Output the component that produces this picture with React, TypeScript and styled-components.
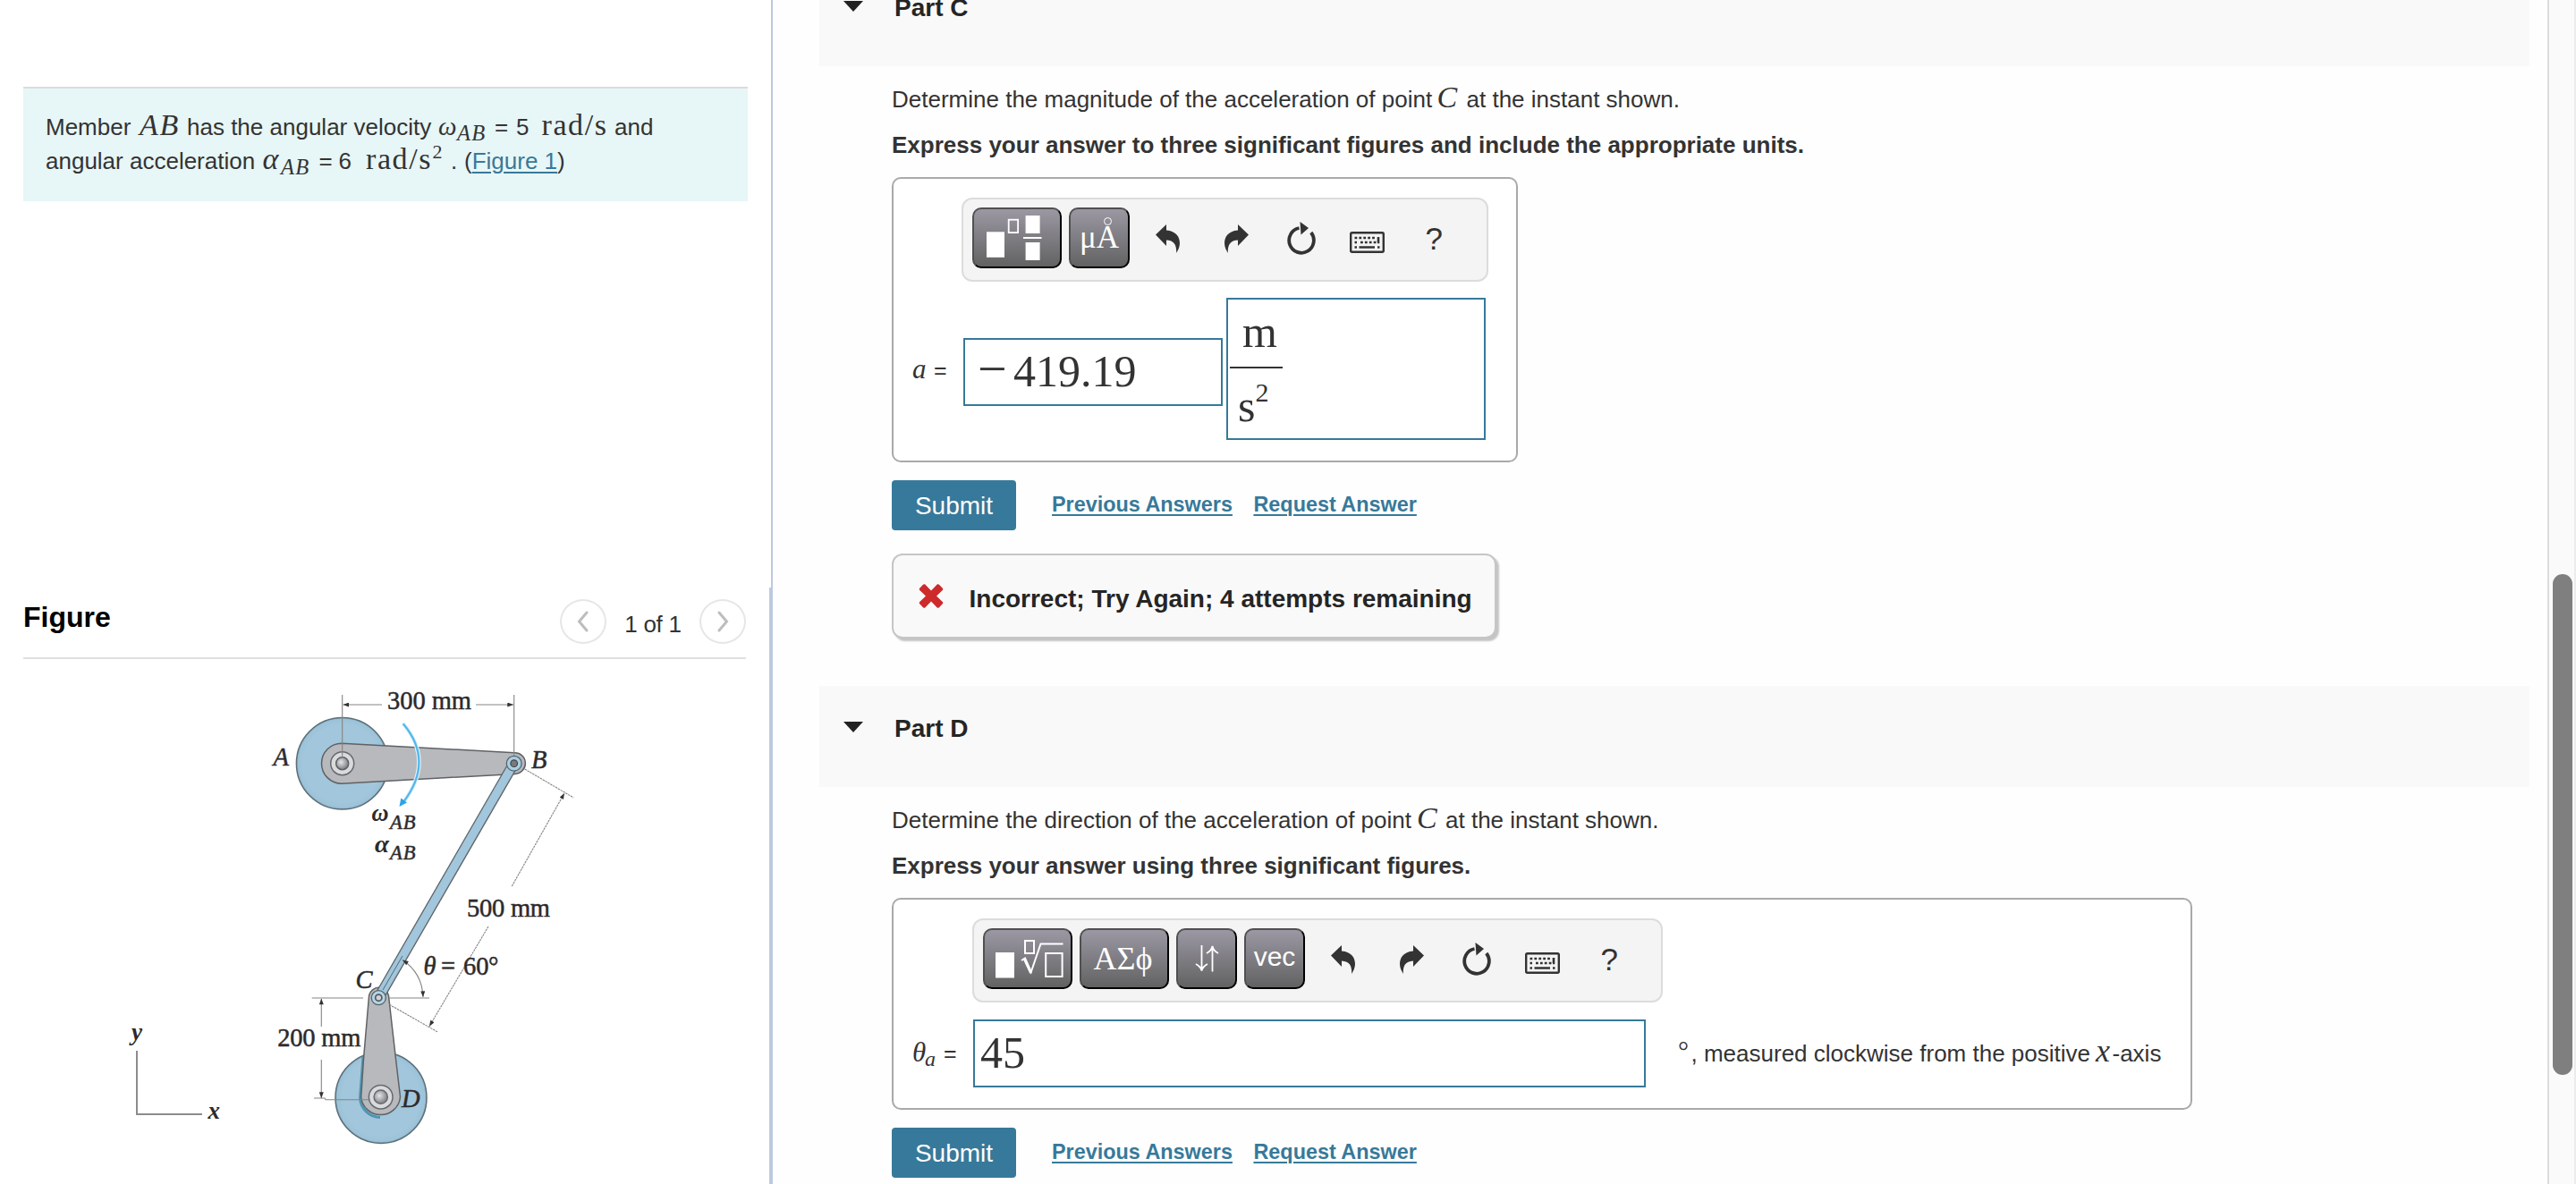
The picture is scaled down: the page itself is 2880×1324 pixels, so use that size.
import React from "react";
import styled, { createGlobalStyle, css } from "styled-components";

const sans = '"Liberation Sans", Arial, Helvetica, sans-serif';
const serif = '"Liberation Serif", "Times New Roman", serif';
const teal = "#37799a";

const Global = createGlobalStyle`
  * { box-sizing: border-box; }
  html, body { margin: 0; padding: 0; overflow: hidden; }
  body { background: #fff; color: #333; font-family: ${sans}; }
`;

/* ---------- page frame ---------- */

const Page = styled.div`
  display: flex;
  width: 2880px;
  height: 1324px;
  overflow: hidden;
  background: #fefefe;
`;

const Left = styled.aside`
  display: flex;
  flex-direction: column;
  flex: none;
  width: 864px;
  background: #fff;
  border-right: 2px solid #bccae0;
`;

const ProblemPane = styled.section`
  flex: none;
  height: 657px;
  padding: 97px 26px 0;
`;

const ProblemBox = styled.div`
  width: 810px;
  height: 128px;
  padding: 24px 0 0 25px;
  border-top: 2px solid #dcdcdc;
  background: #e7f6f6;
`;

const Line = styled.div<{ $bold?: boolean; $top?: number }>`
  height: 38px;
  margin-top: ${(p) => p.$top ?? 0}px;
  line-height: 38px;
  font-size: 26px;
  font-weight: ${(p) => (p.$bold ? 700 : 400)};
  white-space: pre;
`;

const Run = styled.span<{ $w?: number }>`
  display: inline-block;
  ${(p) => p.$w && css`width: ${p.$w}px;`}
  height: 38px;
  vertical-align: top;
  white-space: pre;
`;

const Math = styled.span<{ $size?: number; $roman?: boolean; $spacing?: number; $rise?: number }>`
  display: inline-block;
  font-family: ${serif};
  font-style: ${(p) => (p.$roman ? "normal" : "italic")};
  font-weight: 400;
  font-size: ${(p) => p.$size ?? 34}px;
  line-height: 0;
  letter-spacing: ${(p) => p.$spacing ?? 0}px;
  vertical-align: ${(p) => p.$rise ?? 0}px;
`;

const Link = styled.a`
  color: ${teal};
  text-decoration: underline;
  text-decoration-thickness: 2px;
  text-underline-offset: 3px;
`;

/* ---------- figure pane ---------- */

const FigurePane = styled.section`
  flex: 1;
  padding-left: 26px;
  border-right: 2px solid #bccae0;
`;

const FigureHeader = styled.header`
  display: flex;
  align-items: center;
  width: 808px;
  height: 80px;
  border-bottom: 2px solid #dfdfdf;
`;

const FigureTitle = styled.h2`
  margin: -13px auto 0 0;
  color: #000;
  font-size: 32px;
  line-height: 36px;
`;

const RoundButton = styled.button`
  display: flex;
  align-items: center;
  justify-content: center;
  width: 52px;
  height: 50px;
  margin-bottom: 3px;
  padding: 0;
  border: 2px solid #e6e6e6;
  border-radius: 50%;
  background: #fff;
`;

const Counter = styled.span`
  width: 104px;
  padding-top: 3px;
  font-size: 26px;
  line-height: 30px;
  letter-spacing: -0.3px;
  text-align: center;
`;

const Chevron = ({ flip }: { flip?: boolean }) => (
  <svg width="16" height="26" viewBox="0 0 16 26" fill="none" stroke="#bdbdbd" strokeWidth="3" strokeLinecap="round">
    <path d={flip ? "M4 3 12.5 13 4 23" : "M12 3 3.5 13 12 23"} />
  </svg>
);

const Drawing = styled.svg`
  display: block;
  margin-left: -26px;
  font-family: ${serif};
`;

const Dim = styled.path`
  fill: none;
  stroke: #858585;
  stroke-width: 1.1;
`;

const Body = styled.path`
  fill: #b8b9bc;
  stroke: #5f6265;
  stroke-width: 1.5;
`;

const Label = styled.text<{ $italic?: boolean; $size?: number; $bold?: boolean }>`
  font-style: ${(p) => (p.$italic ? "italic" : "normal")};
  font-weight: ${(p) => (p.$bold ? 700 : 400)};
  font-size: ${(p) => p.$size ?? 28.5}px;
  fill: #2d2a2b;
  stroke: #2d2a2b;
  stroke-width: ${(p) => (p.$bold ? 0 : 0.5)};
`;

const Linkage = () => (
  <Drawing width="860" height="587" viewBox="0 737 860 587">
    <defs>
      <radialGradient id="disc">
        <stop offset="0.85" stopColor="#a2c6db" />
        <stop offset="0.96" stopColor="#9cc3d9" />
        <stop offset="1" stopColor="#7fabc4" />
      </radialGradient>
      <radialGradient id="pin" cx="0.4" cy="0.4">
        <stop offset="0" stopColor="#e4e5e6" />
        <stop offset="1" stopColor="#8e9093" />
      </radialGradient>
      <marker id="tip" viewBox="0 0 8 6" refX="8" refY="3" markerWidth="7" markerHeight="5" orient="auto-start-reverse" markerUnits="userSpaceOnUse">
        <path d="M0 0 8 3 0 6Z" fill="#333" />
      </marker>
    </defs>

    <circle cx="382.7" cy="853.7" r="51.3" fill="url(#disc)" stroke="#5d6d76" strokeWidth="1.5" />
    <Body d="M382 831.2 L575 841.7 A11.8 11.8 0 0 1 576 865.4 L382 876.2 A22.5 22.5 0 0 1 382 831.2Z" />
    <circle cx="382.7" cy="853.7" r="13" fill="#d9dadc" stroke="#66696c" strokeWidth="1.5" />
    <circle cx="382.7" cy="853.7" r="7" fill="url(#pin)" stroke="#5d6063" strokeWidth="1.5" />

    <circle cx="426" cy="1227.4" r="51" fill="url(#disc)" stroke="#5d6d76" strokeWidth="1.5" />
    <path d="M406 1182 L402.5 1228 A23 23 0 0 0 425 1249.5" fill="none" stroke="#4d96b3" strokeWidth="3" />
    <Body d="M412.6 1113 A11.2 11.2 0 0 1 434.4 1113 L442.5 1184 L447.5 1226.7 A22 22 0 0 1 403.7 1226.7 L406.5 1184Z" />
    <circle cx="425.7" cy="1226.7" r="13.3" fill="#d9dadc" stroke="#66696c" strokeWidth="1.5" />
    <circle cx="425.7" cy="1226.7" r="7.6" fill="url(#pin)" stroke="#66696c" strokeWidth="1.5" />

    <path d="M574.5 853.7 423.3 1115.7" stroke="#5d6468" strokeWidth="12" />
    <path d="M574.5 853.7 423.3 1115.7" stroke="#a2c6db" strokeWidth="9.4" />
    <path d="M450 1069 428 1107" stroke="#4f6c7a" strokeWidth="1" />
    <circle cx="574.7" cy="853.7" r="8.4" fill="#a9cfe3" stroke="#54646d" strokeWidth="1.3" />
    <circle cx="574.7" cy="853.7" r="3.8" fill="#777b7f" stroke="#444" strokeWidth="1.2" />
    <circle cx="423.3" cy="1115.7" r="8" fill="#b5d5e6" stroke="#54646d" strokeWidth="1.3" />
    <circle cx="423.3" cy="1115.7" r="3.6" fill="#d0d3d5" stroke="#55595c" strokeWidth="1.7" />

    <Dim d="M382.7 777V848 M574.7 777V845" />
    <Dim d="M427 788H383.5" markerEnd="url(#tip)" />
    <Dim d="M532 788H574" markerEnd="url(#tip)" />
    <Dim d="M586.7 860 641.3 892 M435.3 1123.3 489.3 1154" strokeDasharray="2.5 0.8" />
    <Dim d="M572.3 991 631 887" markerEnd="url(#tip)" strokeDasharray="2.5 0.8" />
    <Dim d="M546 1036 480 1147.7" markerEnd="url(#tip)" strokeDasharray="2.5 0.8" />
    <Dim d="M435 1116H480 M348.7 1116H406 M351 1228H363L364 1229.7H412" />
    <Dim d="M359.3 1148V1116.7" markerEnd="url(#tip)" />
    <Dim d="M359.3 1185V1228" markerEnd="url(#tip)" />
    <Dim d="M450 1073.5Q472 1088 473 1115" markerStart="url(#tip)" markerEnd="url(#tip)" />

    <path d="M450.7 809.3Q486 851 451 897" fill="none" stroke="#e4f1f8" strokeWidth="4.5" />
    <path d="M450.7 809.3Q486 851 451 897" fill="none" stroke="#52b8ee" strokeWidth="2.3" />
    <path d="M446.5 902 448.3 892.5 455 897.5Z" fill="#2ea3e6" />

    <path d="M153 1175V1246H226" fill="none" stroke="#8c8c8c" strokeWidth="2" />

    <Label x="433" y="792.7" textLength="94">300 mm</Label>
    <Label x="522" y="1024.7" textLength="93">500 mm</Label>
    <Label x="310.3" y="1170" textLength="93">200 mm</Label>
    <Label $italic x="305.5" y="855.7">A</Label>
    <Label $italic x="594" y="859">B</Label>
    <Label $italic x="397.5" y="1104.7">C</Label>
    <Label $italic x="449" y="1238.3">D</Label>
    <Label $italic $bold $size={27} x="415.5" y="918" textLength="19" lengthAdjust="spacingAndGlyphs">ω</Label>
    <Label $italic $size={22.5} x="436" y="926.7" textLength="28.5">AB</Label>
    <Label $italic $bold $size={27} x="419" y="952.7" textLength="16" lengthAdjust="spacingAndGlyphs">α</Label>
    <Label $italic $size={22.5} x="436" y="961" textLength="28.5">AB</Label>
    <Label $italic x="473.5" y="1090">θ</Label>
    <Label x="493" y="1090">=</Label>
    <Label x="518" y="1090">60</Label>
    <Label x="546" y="1090">°</Label>
    <Label $italic $bold $size={27} x="147" y="1162.5">y</Label>
    <Label $italic $bold $size={27} x="232.5" y="1250.7">x</Label>
  </Drawing>
);

/* ---------- question column ---------- */

const Main = styled.main`
  flex: 1;
  padding: 0 20px 0 52px;
`;

const PartHeader = styled.header<{ $clipped?: boolean }>`
  display: flex;
  align-items: flex-start;
  height: 113px;
  margin-top: ${(p) => (p.$clipped ? -39 : 0)}px;
  padding: 31px 0 0 27px;
  background: #f9f9f9;
`;

const Caret = styled.span`
  margin: 9px 35px 0 0;
  border: 11px solid transparent;
  border-top: 12px solid #222;
  border-bottom: 0;
`;

const PartTitle = styled.h3`
  margin: 0;
  color: #252525;
  font-size: 28px;
  line-height: 33px;
`;

const Content = styled.div`
  padding: 18px 0 0 81px;
`;

const AnswerBox = styled.div<{ $w: number; $h: number }>`
  width: ${(p) => p.$w}px;
  height: ${(p) => p.$h}px;
  margin: 17px 0 20px;
  padding: 21px 0 0 21px;
  border: 2px solid #a9a9a9;
  border-radius: 10px;
  background: #fff;
`;

const Toolbar = styled.div<{ $w: number; $left: number }>`
  display: flex;
  align-items: center;
  width: ${(p) => p.$w}px;
  height: 94px;
  margin-left: ${(p) => p.$left}px;
  padding: 0 0 4px 10px;
  border: 2px solid #dcdcdc;
  border-radius: 12px;
  background: #f4f4f4;
`;

const PaletteButton = styled.button<{ $w: number; $font?: string; $size?: number; $lift?: number }>`
  display: flex;
  align-items: center;
  justify-content: center;
  flex: none;
  width: ${(p) => p.$w}px;
  height: 68px;
  margin: 0 8px 0 0;
  padding: 0 0 ${(p) => p.$lift ?? 0}px;
  border: 2px solid;
  border-color: #505050 #000 #000 #505050;
  border-radius: 10px;
  background: linear-gradient(#9b98a3, #626262);
  color: #fff;
  font: ${(p) => p.$size ?? 35}px ${(p) => p.$font ?? serif};
`;

const IconShift = styled.span<{ $x: number }>`
  display: flex;
  margin-right: ${(p) => -p.$x}px;
  margin-left: ${(p) => p.$x}px;
`;

const AngstromBase = styled.span`
  position: relative;
`;

const AngstromRing = styled.span`
  position: absolute;
  top: -3px;
  left: 8px;
  width: 9px;
  height: 9px;
  border: 1.5px solid #fff;
  border-radius: 50%;
`;

const Tool = styled.span<{ $w: number; $left: number; $drop?: number }>`
  display: flex;
  flex: none;
  width: ${(p) => p.$w}px;
  margin: ${(p) => p.$drop ?? 0}px 0 0 ${(p) => p.$left}px;
  color: #333;
  font-size: 35px;
  line-height: 36px;
`;

const UndoIcon = ({ flip }: { flip?: boolean }) => (
  <svg width="27" height="32" viewBox="0 0 27 32" fill="#333">
    <path
      transform={flip ? "matrix(-1 0 0 1 27 0)" : undefined}
      d="M0 11.5 12 0V6.5C23 7.5 27 14 27 21C27 25 25 29 23.2 32C23.5 23 21 18 12 17.5V24Z"
    />
  </svg>
);

const ResetIcon = () => (
  <svg width="32" height="37" viewBox="0 0 32 37">
    <path d="M13.5 7A13.8 14 0 1 0 26.8 12" fill="none" stroke="#333" strokeWidth="3.8" />
    <path d="M14.5 0 24 7 15.5 14.5Z" fill="#333" />
  </svg>
);

const KeyboardIcon = () => (
  <svg width="39" height="24" viewBox="0 0 39 24">
    <rect x="1.2" y="1.2" width="36.6" height="21.6" rx="1.5" fill="#f4f4f4" stroke="#333" strokeWidth="2.4" />
    <path d="M5.5 7H30M5.5 12H8M12 12H30" stroke="#333" strokeWidth="2.6" strokeDasharray="2.8 2.1" />
    <path d="M31 12H32V6M5.5 17.5H8M10.5 17.5H28M31 17.5H33.5" fill="none" stroke="#333" strokeWidth="2.6" />
  </svg>
);

const FractionIcon = () => (
  <svg width="62" height="50" viewBox="0 0 62 50" fill="#fff">
    <rect x="0" y="18.3" width="20" height="28.5" />
    <rect x="24.7" y="4.7" width="10.4" height="14.4" fill="none" stroke="#fff" strokeWidth="1.8" />
    <rect x="43.6" y="0" width="16" height="20" />
    <rect x="41" y="24" width="20.5" height="2" />
    <rect x="43.6" y="30" width="16" height="20" />
  </svg>
);

const RootIcon = () => (
  <svg width="76" height="43" viewBox="0 0 76 43" fill="none" stroke="#fff" strokeWidth="2">
    <rect x="0" y="14" width="21" height="28.5" fill="#fff" stroke="none" />
    <rect x="33" y="1" width="10" height="14" />
    <path d="M29 23 33 20.5 39.7 36 50.5 4.5H75.5" />
    <path d="M32.500 21.500 39.700 37" strokeWidth="3" />
    <rect x="56.2" y="15" width="18.4" height="26" />
  </svg>
);

const ArrowsIcon = () => (
  <svg width="27" height="30" viewBox="0 0 27 30" fill="none" stroke="#fff" strokeWidth="1.8">
    <path d="M7.5 0V28M1 21Q6.5 24 7.5 28.5Q8.5 24 14 21" />
    <path d="M19.5 29.5V1M13 9Q18.500 6 19.500 1Q20.500 6 26 9" />
  </svg>
);

const EditTools = () => (
  <>
    <Tool $w={27} $left={20.5} $drop={1}><UndoIcon /></Tool>
    <Tool $w={27} $left={50} $drop={1}><UndoIcon flip /></Tool>
    <Tool $w={32} $left={43.5} $drop={1}><ResetIcon /></Tool>
    <Tool $w={39} $left={38} $drop={9}><KeyboardIcon /></Tool>
    <Tool $w={20} $left={45.5} $drop={1}>?</Tool>
  </>
);

const AnswerRow = styled.div<{ $top: number }>`
  display: flex;
  align-items: center;
  margin-top: ${(p) => p.$top}px;
`;

const Name = styled.span<{ $w: number; $drop?: number }>`
  flex: none;
  width: ${(p) => p.$w}px;
  height: 38px;
  margin-top: ${(p) => p.$drop ?? 0}px;
  font-size: 25px;
  line-height: 38px;
  white-space: pre;
`;

const Field = styled.div<{ $w: number; $h?: number; $pad: number; $left?: number; $drop?: number }>`
  flex: none;
  width: ${(p) => p.$w}px;
  height: ${(p) => p.$h ?? 76}px;
  margin: ${(p) => p.$drop ?? 0}px 0 0 ${(p) => p.$left ?? 0}px;
  padding-left: ${(p) => p.$pad}px;
  border: 2px solid ${teal};
  background: #fff;
  font-family: ${serif};
  font-size: 50px;
  line-height: 70px;
  white-space: pre;
`;

const Minus = styled.span`
  display: inline-block;
  width: 38px;
  margin-left: -2px;
  margin-right: 2px;
  font-size: 58px;
  line-height: 0;
`;

const Fraction = styled.div`
  display: flex;
  flex-direction: column;
  width: 59px;
  padding-top: 11px;
`;

const Numerator = styled.div`
  height: 66px;
  padding: 0 0 0 14px;
  border-bottom: 2px solid #333;
  line-height: 50px;
`;

const Denominator = styled.div`
  padding-left: 9px;
  line-height: 84px;
`;

const Suffix = styled.span`
  height: 38px;
  margin-left: 36px;
  font-size: 26px;
  line-height: 38px;
  white-space: pre;
`;

const Actions = styled.div`
  display: flex;
  align-items: center;
  height: 56px;
`;

const Submit = styled.button`
  width: 139px;
  height: 56px;
  margin-right: 40px;
  padding: 0;
  border: 0;
  border-radius: 4px;
  background: ${teal};
  color: #fff;
  font: 28px/57px ${sans};
`;

const ActionLink = styled(Link)`
  margin: -3px 23.5px 0 0;
  font-size: 23.4px;
  font-weight: 700;
  line-height: 30px;
`;

const Feedback = styled.div`
  display: flex;
  align-items: center;
  width: 676px;
  height: 95px;
  margin: 26px 0 53px;
  padding-left: 28px;
  border: 2px solid #c6c6c6;
  border-radius: 12px;
  background: #f9f9f9;
  box-shadow: 3px 3px 2px #c4c4c4;
  color: #252525;
  font-size: 28px;
  font-weight: 700;
`;

const FeedbackText = styled.span`
  margin: 7px 0 0 28.5px;
  white-space: pre;
`;

const CrossIcon = () => (
  <svg width="28" height="27" viewBox="0 0 28 27">
    <path
      d="M7 .3 14 7.5 21 .3Q22 0 23 .8L27 5Q27.600 6 27 6.800L20 13.500 27 20.200Q27.600 21 27 22L23 26.200Q22 27 21 26.700L14 19.500 7 26.700Q6 27 5 26.200L1 22Q.4 21 1 20.200L8 13.500 1 6.800Q.4 6 1 5L5 .8Q6 0 7 .3Z"
      fill="#cd2a2c"
    />
  </svg>
);

const SubmitRow = () => (
  <Actions>
    <Submit>Submit</Submit>
    <ActionLink>Previous Answers</ActionLink>
    <ActionLink>Request Answer</ActionLink>
  </Actions>
);

/* ---------- scrollbar ---------- */

const ScrollTrack = styled.div`
  flex: none;
  width: 32px;
  padding: 642px 0 0 4px;
  border-left: 2px solid #dcdcdc;
  border-right: 2px solid #ececec;
  background: #fafafa;
`;

const ScrollThumb = styled.div`
  width: 22px;
  height: 560px;
  border-radius: 11px;
  background: #7f7f7f;
`;

export default function App() {
  return (
    <Page>
      <Global />
      <Left>
        <ProblemPane>
          <ProblemBox>
            <Line>
              <Run $w={105}>Member</Run>
              <Run $w={53}><Math $size={34} $spacing={1.8}>AB</Math></Run>
              <Run $w={281}>has the angular velocity</Run>
              <Run $w={21}><Math $size={29}>ω</Math></Run>
              <Run $w={42}><Math $size={24.5} $spacing={1.2} $rise={-6}>AB</Math></Run>
              <Run $w={24}>=</Run>
              <Run $w={28.5}>5</Run>
              <Run $w={81.5}><Math $roman $size={34} $spacing={1.6}>rad/s</Math></Run>
              <Run>and</Run>
            </Line>
            <Line>
              <Run $w={242.5}>angular acceleration</Run>
              <Run $w={20.5}><Math $size={34}>α</Math></Run>
              <Run $w={42.5}><Math $size={24.5} $spacing={1.2} $rise={-6}>AB</Math></Run>
              <Run $w={22}>=</Run>
              <Run $w={30.5}>6</Run>
              <Run $w={74.5}><Math $roman $size={34} $spacing={1.6}>rad/s</Math></Run>
              <Run $w={20.5}><Math $roman $size={22} $rise={12}>2</Math></Run>
              <Run $w={15}>.</Run>
              <Run>(<Link>Figure 1</Link>)</Run>
            </Line>
          </ProblemBox>
        </ProblemPane>
        <FigurePane>
          <FigureHeader>
            <FigureTitle>Figure</FigureTitle>
            <RoundButton><Chevron /></RoundButton>
            <Counter>1 of 1</Counter>
            <RoundButton><Chevron flip /></RoundButton>
          </FigureHeader>
          <Linkage />
        </FigurePane>
      </Left>

      <Main>
        <PartHeader $clipped>
          <Caret />
          <PartTitle>Part C</PartTitle>
        </PartHeader>
        <Content>
          <Line>
            <Run $w={609.5}>Determine the magnitude of the acceleration of point</Run>
            <Run $w={33}><Math>C</Math></Run>
            <Run>at the instant shown.</Run>
          </Line>
          <Line $bold $top={13}>Express your answer to three significant figures and include the appropriate units.</Line>
          <AnswerBox $w={700} $h={319}>
            <Toolbar $w={589} $left={55}>
              <PaletteButton $w={100}><IconShift $x={-3}><FractionIcon /></IconShift></PaletteButton>
              <PaletteButton $w={68} $lift={-4}>
                μ<AngstromBase>A<AngstromRing /></AngstromBase>
              </PaletteButton>
              <EditTools />
            </Toolbar>
            <AnswerRow $top={18}>
              <Name $w={57} $drop={3}><Run $w={24}><Math $size={31}>a</Math></Run>=</Name>
              <Field $w={290} $pad={16} $drop={6}><Minus>−</Minus>419.19</Field>
              <Field $w={290} $h={159} $pad={2} $left={4}>
                <Fraction>
                  <Numerator>m</Numerator>
                  <Denominator>s<Math $roman $size={30} $rise={22}>2</Math></Denominator>
                </Fraction>
              </Field>
            </AnswerRow>
          </AnswerBox>
          <SubmitRow />
          <Feedback>
            <CrossIcon />
            <FeedbackText>Incorrect; Try Again; 4 attempts remaining</FeedbackText>
          </Feedback>
        </Content>

        <PartHeader>
          <Caret />
          <PartTitle>Part D</PartTitle>
        </PartHeader>
        <Content>
          <Line>
            <Run $w={587}>Determine the direction of the acceleration of point</Run>
            <Run $w={32}><Math>C</Math></Run>
            <Run>at the instant shown.</Run>
          </Line>
          <Line $bold $top={13}>Express your answer using three significant figures.</Line>
          <AnswerBox $w={1454} $h={237}>
            <Toolbar $w={772} $left={67}>
              <PaletteButton $w={100}><IconShift $x={2}><RootIcon /></IconShift></PaletteButton>
              <PaletteButton $w={100} $size={36}><IconShift $x={-1.5}>ΑΣϕ</IconShift></PaletteButton>
              <PaletteButton $w={68}><ArrowsIcon /></PaletteButton>
              <PaletteButton $w={68} $font={sans} $size={30} $lift={4}>vec</PaletteButton>
              <EditTools />
            </Toolbar>
            <AnswerRow $top={19}>
              <Name $w={68}>
                <Run $w={14}><Math $size={31}>θ</Math></Run>
                <Run $w={21}><Math $size={24} $rise={-5}>a</Math></Run>=
              </Name>
              <Field $w={752} $pad={6}>45</Field>
              <Suffix>
                <Run $w={14.5}><Math $roman $size={30} $rise={2}>°</Math></Run>
                <Run $w={452.5}>, measured clockwise from the positive</Run>
                <Run $w={18.5}><Math $size={36}>x</Math></Run>
                <Run>-axis</Run>
              </Suffix>
            </AnswerRow>
          </AnswerBox>
          <SubmitRow />
        </Content>
      </Main>

      <ScrollTrack>
        <ScrollThumb />
      </ScrollTrack>
    </Page>
  );
}
